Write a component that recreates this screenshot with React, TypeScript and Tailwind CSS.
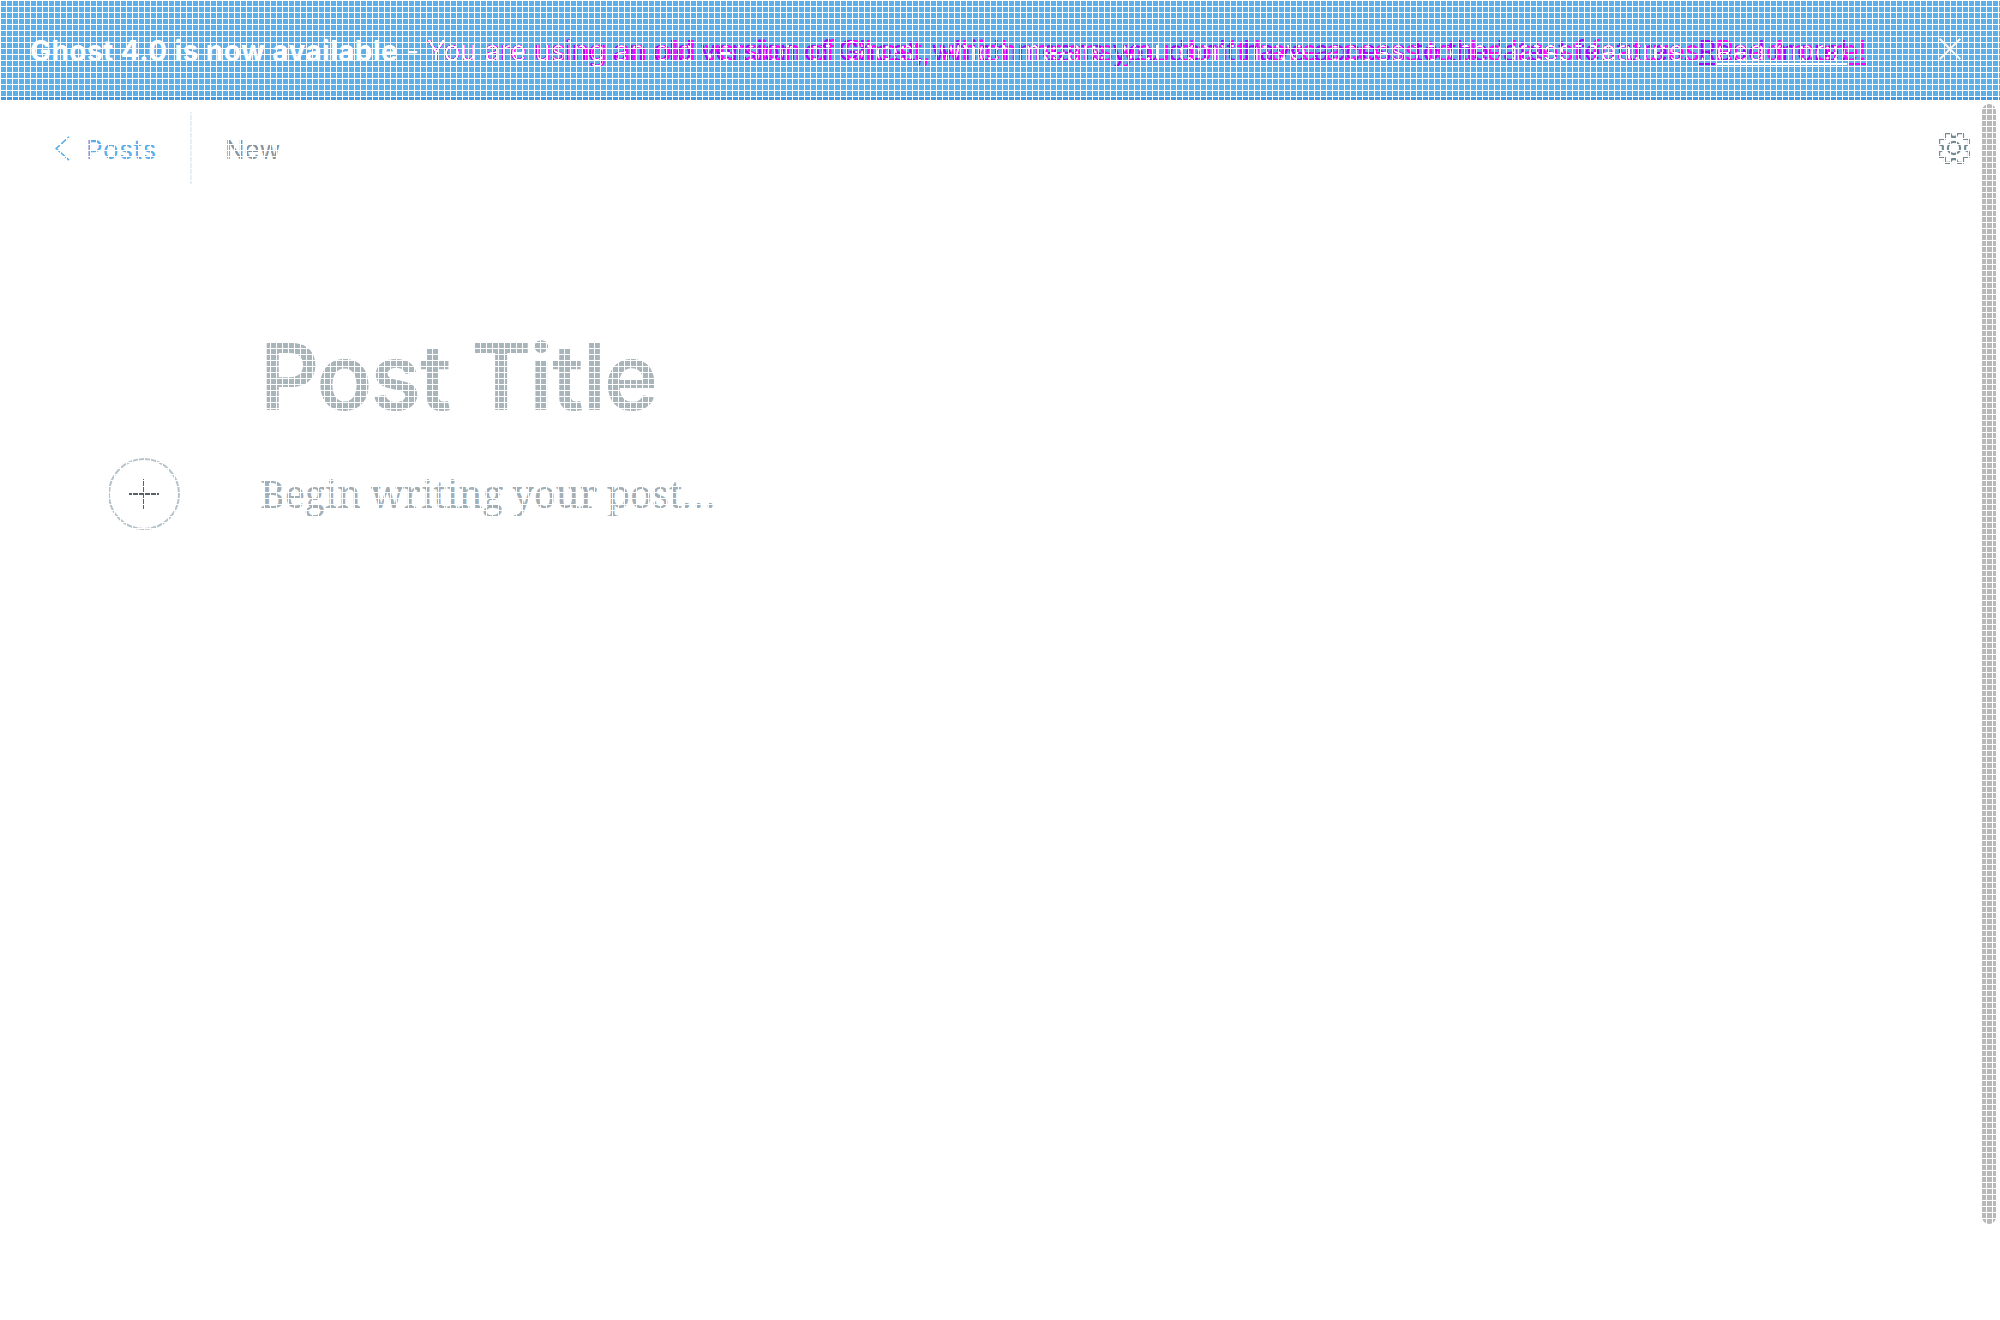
import React from "react";

const message =
  "You are using an old version of Ghost, which means you don't have access to the latest features.";

export default function App() {
  return (
    <div className="relative flex h-[1320px] w-[2000px] flex-col overflow-hidden bg-white font-['Inter',sans-serif]">
      <svg className="absolute size-0" aria-hidden="true">
        <filter id="ghosting" colorInterpolationFilters="sRGB">
          <feColorMatrix values="0.667 0 1 0 0  1 0 1 0 -1  0 0 0 0 1  0 0 0 1 0" />
        </filter>
      </svg>

      <header className="flex h-[100px] shrink-0 items-center border-b-[3px] border-[#4299de] bg-[#5dafea] pl-[30px] pr-[39px] text-[28px] leading-[40px] text-white">
        <strong className="whitespace-pre pt-[5px] font-bold tracking-[0.44px]">Ghost 4.0 is now available</strong>
        <span className="whitespace-pre pt-[5px]"> - </span>
        <p className="grid flex-1 whitespace-nowrap pt-[5px] [filter:url(#ghosting)]">
          <span className="col-start-1 row-start-1 tracking-[-0.15px] text-[#ff0000]">
            {message} <a className="underline">Read more!</a>
          </span>
          <span aria-hidden="true" className="col-start-1 row-start-1 tracking-[0.03px] text-[#0000ff] mix-blend-plus-lighter">
            {message} <a className="underline">Read more!</a>
          </span>
        </p>
        <svg className="size-[22px]" viewBox="0 0 22 22" stroke="#f4f4f4" strokeWidth="2">
          <path d="M.7.7l20.600 20.600M21.300.7L.7 21.300" />
        </svg>
      </header>

      <div className="flex min-h-0 flex-1">
        <main className="flex w-[1982px] flex-col">
          <nav className="mt-[12px] flex h-[72px] items-center pl-[55px] pr-[11px] text-[26px]">
            <svg className="h-[25px] w-[15px]" viewBox="0 0 15 25" fill="none" stroke="#5baeea" strokeWidth="1.6">
              <path d="M14 .8L1.2 12.5 14 24.2" />
            </svg>
            <span className="ml-[16px] w-[104px] pt-[2px] tracking-[0.6px] text-[#5baeea]">Posts</span>
            <div className="h-[72px] w-[2px] bg-[#e5eff5]" />
            <span className="ml-[33px] flex-1 pt-[2px] text-[#8495a0]">New</span>
            <svg className="size-[34px]" viewBox="0 0 32 32" fill="none" stroke="#738a94" strokeWidth="2" strokeLinejoin="round">
              <path d="M7.500 2h5l1.500 3.500h4L19.500 2h5v5.500H30v5l-3.500 1.500v4l3.500 1.500v5h-5.500V30h-5L18 26.500h-4L12.500 30h-5v-5.500H2v-5L5.500 18v-4L2 12.500v-5h5.500z" />
              <circle cx="16" cy="16" r="5.800" />
            </svg>
          </nav>

          <h1 className="ml-[260px] mt-[133px] text-[92px] font-semibold leading-[120px] tracking-[-2.05px] text-[#a8b5bb]">Post Title</h1>
          <div className="mt-[21px] flex h-[72px] items-center pl-[108px]">
            <button className="flex size-[72px] items-center justify-center rounded-full border-2 border-[#b5c4cc]">
              <svg className="size-[30px]" viewBox="0 0 30 30" stroke="#55626b" strokeWidth="2">
                <path d="M0 15h30M15 0v30" />
              </svg>
            </button>
            <p className="ml-[80px] whitespace-nowrap pb-[2px] font-['Noto_Serif','DejaVu_Serif_Condensed','DejaVu_Serif',serif] text-[38px] tracking-[-0.2px] text-[#a1afb7]">
              Begin writing your post<span className="tracking-[2.2px]">...</span>
            </p>
          </div>
        </main>
        <div className="mt-[4px] h-[1120px] w-[14px] rounded-full bg-[#b8b8b8]" />
      </div>

      <div className="pointer-events-none absolute inset-0 bg-[linear-gradient(to_right,white_1px,transparent_1px),linear-gradient(to_bottom,white_1px,transparent_1px)] bg-[size:6px_6px]" />
    </div>
  );
}
